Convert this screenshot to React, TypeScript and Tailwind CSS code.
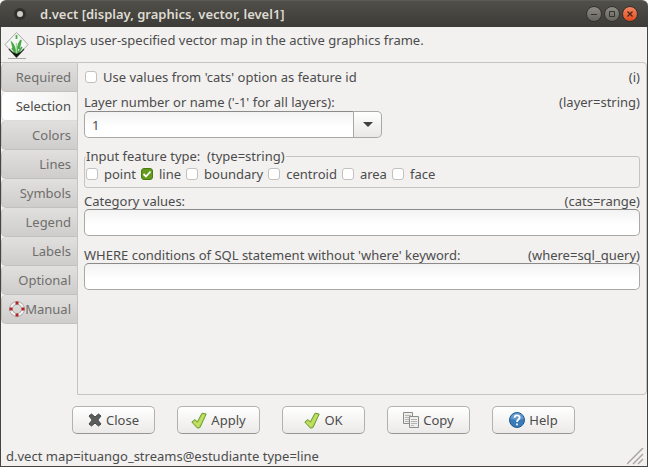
import { useState } from "react";
import type { ReactNode } from "react";

const TABS = ["Required", "Selection", "Colors", "Lines", "Symbols", "Legend", "Labels", "Optional", "Manual"];
const FEATURES = ["point", "line", "boundary", "centroid", "area", "face"];

function GrassLogo() {
  return (
    <svg width="26" height="30" viewBox="0 0 26 30" fill="none" aria-hidden="true">
      <path d="M13.500 1.500 25 13.500 13.500 26 2 13.500Z" fill="#f6f6f4" stroke="#a5a8a3" />
      <path d="M6 18 13.500 26 21 18" stroke="#3a3a3a" strokeWidth="1.300" />
      <path d="M13 23C12 17 11 14 9 12L11 20M14 23C14 16 16 12 18 9L16 18M13 23 9 17M15 22 19 16" stroke="#45a945" strokeWidth="1.600" />
      <path d="M13.500 12v10" stroke="#a5d6a3" strokeWidth="1.500" />
      <path d="M13.500 4v4" stroke="#4bb04b" strokeWidth="1.800" />
      <path d="M8 20 13.500 26 19 20 13.500 23Z" fill="#0e130c" />
      <path d="M5 27.500h18" stroke="#a3aba3" />
    </svg>
  );
}

function LifeRing() {
  return (
    <svg width="16" height="16" viewBox="0 0 16 16" fill="none" aria-hidden="true">
      <circle cx="8" cy="8" r="6" stroke="#a3a3a1" strokeWidth="3.600" />
      <circle cx="8" cy="8" r="6" stroke="#f3f3f1" strokeWidth="2.200" />
      <path d="M6.500 2h3M6.500 14h3M2 6.500v3M14 6.500v3" stroke="#b32424" strokeWidth="3" />
    </svg>
  );
}

function CrossIcon() {
  return (
    <svg width="14" height="14" viewBox="0 0 14 14" aria-hidden="true">
      <path d="M1 3 3.500 1 7 4 10.500 1 13 3 9.800 7 13 11 10.500 13 7 10 3.500 13 1 11 4.200 7Z" fill="#5b5d5b" stroke="#444644" strokeLinejoin="round" />
    </svg>
  );
}

function CheckIcon() {
  return (
    <svg width="16" height="17" viewBox="0 0 16 17" aria-hidden="true">
      <path d="M.8 10 4 7.500 6.300 10 11 1.200 15.200 2 9 15.500 6.500 16.200Z" fill="#b2d650" stroke="#6b9a3a" strokeLinejoin="round" />
      <path d="M3 10 7 13.500 12.800 3" fill="none" stroke="#c3e060" strokeWidth="2" />
    </svg>
  );
}

function CopyIcon() {
  return (
    <svg width="16" height="16" viewBox="0 0 16 16" fill="#eeeeec" stroke="#8b8d89" aria-hidden="true">
      <path d="M.5.5h9v11h-9z" />
      <path d="M2 3.500h6M2 5.500h6M2 7.500h6M2 9.500h4" stroke="#b4b5b2" />
      <path d="M6.500 4.500h9v11h-9z" />
      <path d="M8 7.500h6M8 9.500h6M8 11.500h6M8 13.500h3" stroke="#b4b5b2" />
    </svg>
  );
}

function HelpIcon() {
  return (
    <svg width="16" height="16" viewBox="0 0 16 16" fill="none" aria-hidden="true">
      <circle cx="8" cy="8" r="7.500" fill="#397bb8" stroke="#235b91" />
      <path d="M1.500 7a6.500 6 0 0 1 13 0C11 8 5 8 1.500 7Z" fill="#649bcc" />
      <path d="M5.500 5.800C5.500 2.500 10.800 2.600 10.600 5.600 10.500 7.500 8 7.500 8 10M8 11.500v1.800" stroke="#fff" strokeWidth="1.800" />
    </svg>
  );
}

const ACTIONS: { name: string; icon: ReactNode }[] = [
  { name: "Close", icon: <CrossIcon /> },
  { name: "Apply", icon: <CheckIcon /> },
  { name: "OK", icon: <CheckIcon /> },
  { name: "Copy", icon: <CopyIcon /> },
  { name: "Help", icon: <HelpIcon /> },
];

const FIELD =
  "h-[27px] w-full min-w-0 border border-[#a9a8a6] border-t-[#8b8a88] bg-linear-to-b from-[#f3f3f3] to-white to-60% px-[7px] outline-none";

function Check({ label, on = false }: { label: string; on?: boolean }) {
  return (
    <label className="flex items-center gap-[6px]">
      <span className="relative flex">
        <input
          type="checkbox"
          defaultChecked={on}
          className="peer size-3 shrink-0 appearance-none rounded-[3px] border border-[#c3c1be] bg-white checked:border-[#4c7a12] checked:bg-[#639c1c]"
        />
        <svg viewBox="0 0 12 12" className="pointer-events-none absolute inset-0 hidden size-3 peer-checked:block" fill="none" stroke="#fff" strokeWidth="1.800" aria-hidden="true">
          <path d="M2.500 6 5 8.500 9.500 3.500" />
        </svg>
      </span>
      {label}
    </label>
  );
}

function TextRow({ id, label, hint }: { id: string; label: string; hint: string }) {
  return (
    <div>
      <div className="flex h-4 items-center justify-between">
        <label htmlFor={id}>{label}</label>
        <span>{hint}</span>
      </div>
      <input id={id} type="text" className={`${FIELD} block rounded-[5px]`} />
    </div>
  );
}

function TitleBar() {
  const round = "flex size-4 items-center justify-center rounded-full border border-[#33322e]";
  return (
    <header className="flex h-[27px] items-center rounded-t-md border-t border-[#5b5a54] bg-linear-to-b from-[#504f49] to-[#3c3b37] pr-[10px] pl-[14px] text-[#dfdbd2]">
      <button aria-label="Window menu" className="flex size-3 items-center justify-center rounded-full bg-[#30302d]">
        <span className="size-[6px] rounded-full bg-[#d0cdc8]" />
      </button>
      <h1 className="ml-[14px] flex-1 pb-px font-semibold">d.vect [display, graphics, vector, level1]</h1>
      <div className="flex gap-[2px]">
        <button aria-label="Minimize" className={`${round} bg-linear-to-b from-[#8d8b84] to-[#65645e]`}>
          <svg width="8" height="8" stroke="#33322e" fill="none"><path d="M1 4.500h6" /></svg>
        </button>
        <button aria-label="Maximize" className={`${round} bg-linear-to-b from-[#8d8b84] to-[#65645e]`}>
          <svg width="8" height="8" stroke="#33322e" fill="none"><path d="M1.500 1.500h5v5h-5z" /></svg>
        </button>
        <button aria-label="Close window" className={`${round} bg-linear-to-b from-[#f58561] to-[#df4a16]`}>
          <svg width="8" height="8" stroke="#4a2214" strokeWidth="1.300" fill="none"><path d="M1.500 1.500l5 5M6.500 1.500l-5 5" /></svg>
        </button>
      </div>
    </header>
  );
}

export default function App() {
  const [tab, setTab] = useState("Selection");
  return (
    <div className="flex min-h-screen flex-col bg-white font-['Noto_Sans','Open_Sans',sans-serif] text-[13px] leading-4 text-[#4c4c4c]">
      <TitleBar />
      <main className="flex flex-1 flex-col border-x border-b border-[#45443f] bg-[#f2f1f0]">
        <div className="flex h-[35px] gap-[7px] pt-1 pl-[2px]">
          <GrassLogo />
          <p className="pt-px">Displays user-specified vector map in the active graphics frame.</p>
        </div>

        <div className="flex flex-1">
          <div role="tablist" aria-orientation="vertical" className="flex w-[76px] shrink-0 flex-col border-t border-[#c6c4c1]">
            {TABS.map((t) => (
              <button
                key={t}
                role="tab"
                aria-selected={t === tab}
                onClick={() => setTab(t)}
                className={`flex h-[29px] items-center justify-end rounded-l-[5px] border-b border-l pr-[6px] ${
                  t === tab
                    ? "border-[#dddbd9] bg-linear-to-r from-white to-[#f2f1f0] text-[#4c4c4c]"
                    : "border-[#c2c0bd] bg-linear-to-b from-[#e1e0de] to-[#cfcdcb] text-[#6f6e6c]"
                }`}
              >
                {t === "Manual" && <LifeRing />}
                {t}
              </button>
            ))}
          </div>

          <section role="tabpanel" aria-label={tab} className="flex flex-1 flex-col rounded-r-[4px] border border-[#c6c4c1] px-[6px] pt-[6px]">
            <div className="flex h-4 items-center justify-between pl-px">
              <Check label="Use values from 'cats' option as feature id" />
              <span>(i)</span>
            </div>

            <div className="mt-2 flex h-[18px] items-center justify-between">
              <label htmlFor="layer">Layer number or name ('-1' for all layers):</label>
              <span>(layer=string)</span>
            </div>
            <div className="flex w-[298px]">
              <input id="layer" type="text" defaultValue="1" className={`${FIELD} rounded-l-[5px]`} />
              <button aria-label="Show layers" className="flex w-7 shrink-0 items-center justify-center rounded-r-[5px] border border-l-0 border-[#a9a8a6] bg-linear-to-b from-white to-[#e9e8e6]">
                <svg width="10" height="6" fill="#3f3f3f"><path d="M0 0h10L5 5z" /></svg>
              </button>
            </div>

            <fieldset className="mt-[10px] h-10 rounded-[3px] border border-[#c6c4c1] pl-px">
              <legend className="pr-px">Input feature type:&nbsp; (type=string)</legend>
              <div className="flex h-5 items-center gap-[5px]">
                {FEATURES.map((f) => (
                  <Check key={f} label={f} on={f === "line"} />
                ))}
              </div>
            </fieldset>

            <div className="mt-[5px] flex flex-col gap-[11px]">
              <TextRow id="cats" label="Category values:" hint="(cats=range)" />
              <TextRow id="where" label="WHERE conditions of SQL statement without 'where' keyword:" hint="(where=sql_query)" />
            </div>
          </section>
        </div>

        <div className="flex justify-center gap-[22px] pt-[11px] pr-px">
          {ACTIONS.map(({ name, icon }) => (
            <button
              key={name}
              className="flex h-7 w-[83px] items-center justify-center gap-1 rounded-[5px] border border-[#b3b1ae] border-b-[#989693] bg-linear-to-b from-white to-[#ebeae8]"
            >
              {icon}
              {name}
            </button>
          ))}
        </div>

        <footer className="flex h-8 items-end justify-between pt-[14px] pl-[5px]">
          <output className="pb-[2px]">d.vect map=ituango_streams@estudiante type=line</output>
          <svg width="20" height="18" stroke="#aaa7a3" strokeWidth="1.500" fill="none" aria-hidden="true">
            <path d="M0 16 16 0M6 16 16 6M11 16 16 11" />
          </svg>
        </footer>
      </main>
    </div>
  );
}
